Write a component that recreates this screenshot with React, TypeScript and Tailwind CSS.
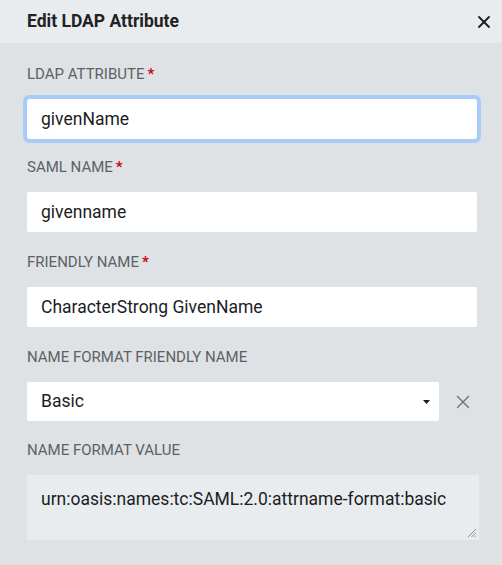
import { X } from 'lucide-react';

const font = { fontFamily: 'Roboto, "Liberation Sans", sans-serif' };

function Label({ text, required }: { text: string; required?: boolean }) {
  return (
    <div className="h-5 leading-5 text-[15px] text-[#5c6166] mb-[15px] flex items-center">
      {text}
      {required && <span className="text-[#d0021b] font-bold ml-[3px]">*</span>}
    </div>
  );
}

export default function App() {
  return (
    <div className="w-[502px] h-[565px] bg-[#dee2e5] text-[#1b1d1f]" style={font}>
      {/* header */}
      <div className="h-[43px] bg-[#e9ecef] flex items-center justify-between pl-[27px] pr-[8px]">
        <h2 className="text-[17.5px] font-bold text-[#222]">Edit LDAP Attribute</h2>
        <X size={20} strokeWidth={2.2} className="text-[#1d1d1d]" />
      </div>

      <div className="pl-[27px] pr-[25px] pt-[21px]">
        <div className="mb-[18px]">
          <Label text="LDAP ATTRIBUTE" required />
          <div className="h-10 bg-white rounded-[2px] flex items-center px-[14px] text-[17.5px] outline outline-[4px] outline-[#a9cbf5] shadow-[0_0_0_1px_#8fbcf2]">
            givenName
          </div>
        </div>
        <div className="mb-5">
          <Label text="SAML NAME" required />
          <div className="h-10 bg-white rounded-[2px] flex items-center px-[14px] text-[17.5px]">givenname</div>
        </div>
        <div className="mb-5">
          <Label text="FRIENDLY NAME" required />
          <div className="h-10 bg-white rounded-[2px] flex items-center px-[14px] text-[17.5px]">CharacterStrong GivenName</div>
        </div>
        <div className="mb-[19px]">
          <Label text="NAME FORMAT FRIENDLY NAME" />
          <div className="flex items-center">
            <div className="h-[39px] w-[412px] bg-white rounded-[2px] flex items-center justify-between pl-[14px] pr-[9px] text-[17.5px]">
              <span>Basic</span>
              <svg width="7" height="4" viewBox="0 0 7 4"><path d="M0 0h7L3.5 4z" fill="#1d1d1d" /></svg>
            </div>
            <X size={22} strokeWidth={1.5} className="text-[#6e7276] ml-[13px]" />
          </div>
        </div>
        <div className="-mr-[2px]">
          <Label text="NAME FORMAT VALUE" />
          <div className="relative h-[65px] bg-[#e9ecef] rounded-[2px] px-[14px] pt-[11px] text-[17.5px]">
            urn:oasis:names:tc:SAML:2.0:attrname-format:basic
            <svg className="absolute right-[2px] bottom-[2px]" width="10" height="10" viewBox="0 0 10 10">
              <path d="M9 1L1 9M9 4.5L4.5 9M9 7.5L7.5 9" stroke="#8a8d90" strokeWidth="1" />
            </svg>
          </div>
        </div>
      </div>
    </div>
  );
}
